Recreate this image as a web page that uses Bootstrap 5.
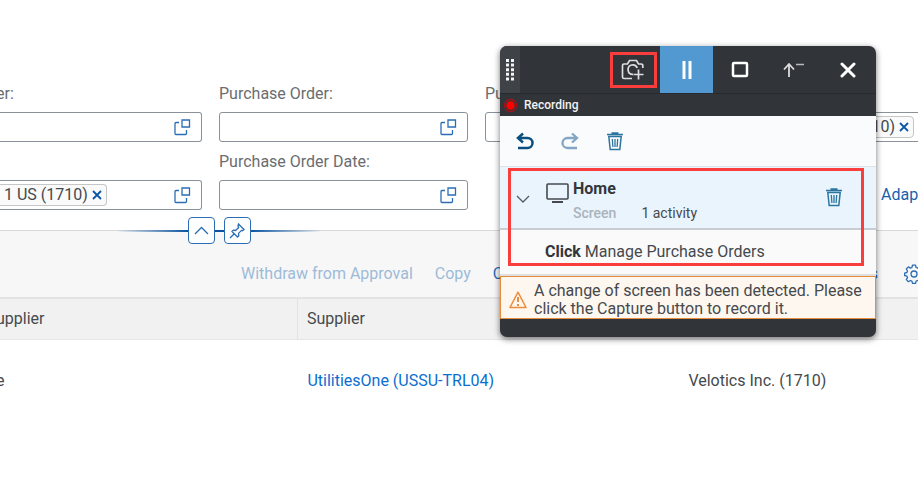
<!DOCTYPE html>
<html lang="en">
<head>
<meta charset="utf-8">
<meta name="viewport" content="width=device-width, initial-scale=1">
<title>Manage Purchase Orders</title>
<link href="https://cdn.jsdelivr.net/npm/bootstrap@5.3.0/dist/css/bootstrap.min.css" rel="stylesheet">
<style>
body{font-family:Roboto,"Liberation Sans",sans-serif;font-size:16px;line-height:20px;color:#45494d;overflow:hidden;min-height:100vh}
svg{display:block;fill:none}
svg:not([stroke]){stroke:currentColor}
button{border:0;background:none;padding:0;color:inherit;display:flex;align-items:center;justify-content:center}
a{text-decoration:none;color:#0a6ed1;white-space:nowrap}
.filter-bar{padding-top:84px;height:231px;border-bottom:1px solid #d9d9d9;box-shadow:0 1px 1px #e8e8e8}
.filter-grid{display:grid;grid-template-columns:202fr 249fr 249fr 167fr;column-gap:17px;row-gap:10px}
.filter-grid label{display:block;height:20px;color:#6a6d70;margin-bottom:8px;white-space:nowrap}
.cut{text-indent:-4px}
.field{display:flex;align-items:center;height:30px;border:1px solid #89919a;border-radius:3px;background:#fff;overflow:hidden}
.field input{border:0;outline:0;background:none;min-width:0;width:0;flex:1 1 0;height:26px}
.field button{color:#2a6db5;width:38px;height:28px;flex:none}
.open-left{border-left:0;border-top-left-radius:0;border-bottom-left-radius:0}
.open-right{border-right:0;border-top-right-radius:0;border-bottom-right-radius:0}
.token{display:flex;align-items:center;height:22px;border:1px solid #c4c6c8;border-radius:4px;background:#fafafa;padding-left:4px;white-space:nowrap}
.field .token button{width:18px;height:20px;color:#0a57a8}
.adapt{display:flex;align-items:center;justify-content:flex-end;height:30px}
.adapt a{width:37px;color:#1661ad}
.splitter{position:absolute;left:116px;top:217px;width:206px;height:27px;display:flex;justify-content:center;gap:9px;background:linear-gradient(90deg,transparent,#0854a0 35%,#0854a0 65%,transparent) 0 13px/100% 2px no-repeat}
.splitter button{width:27px;height:27px;border:1px solid #2a6db5;border-radius:4px;background:#fff;color:#2a6db5}
.actions{height:66px;background:#f7f7f7;padding:33px 0 13px 241px;gap:22px;align-items:center;color:#9dbbd9;white-space:nowrap}
.actions button{height:20px}
.actions .live{color:#2a6db5}
.tail{margin-left:auto;gap:26px}
.tail .gear{width:14px;overflow:hidden;justify-content:flex-start}
.orders{width:100%;table-layout:fixed;border-collapse:collapse}
.orders th{font-weight:400;height:41px;background:#f1f1f1;border-top:2px solid #e3e3e3;border-bottom:1px solid #e5e5e5;padding:0 9px}
.orders th+th{border-left:1px solid #e2e2e2}
.orders td{height:84px;padding:0 10px}
.orders .cut{padding:0}
.recorder{position:absolute;left:500px;top:46px;width:376px;border-radius:7px;overflow:hidden;background:#31353a;box-shadow:0 2px 6px rgba(0,0,0,.55)}
.rec-head{height:48px;color:#fff;border-bottom:1px solid #272a2e;padding-right:1px}
.rec-head button{width:54px}
.rec-head .pause{width:53px;background:#5199d0}
.grip{width:20px;background:#3f4247}
.rec-state{height:22px;color:#f2f2f2;font-size:12px;font-weight:500;padding-left:3px;gap:6px}
.rec-tools{height:51px;background:#fafbfd;border-bottom:1px solid #dfe3e7;padding-left:15px;gap:25px;color:#0b4f80}
.rec-tools button{width:20px;height:24px}
.redo{color:#84a5c4!important}
.bin{color:#2c759f!important}
.screen-row{height:63px;background:#e9f4fd;border-bottom:2px solid #c9cdd1;padding:12px 33px 0 16px}
.screen-name{font-weight:700;color:#32363a}
.screen-meta{font-size:14px;line-height:20px;gap:25px;padding-top:4px}
.screen-meta b{color:#abb3bb;font-weight:500}
.activity{height:46px;background:#fafafa;border-bottom:2px solid #dfdfdf;padding-left:45px}
.activity b{color:#32363a}
.notice{height:43px;background:#fef7f0;border:1px solid #e78c3c;padding:4px 0 0 8px;gap:7px;line-height:18px;color:#45494d}
.rec-foot{height:18px}
.marker{position:absolute;border:3px solid #fa3e3e;pointer-events:none}
.mark-camera{left:610px;top:52px;width:47px;height:36px}
.mark-step{left:508px;top:168px;width:356px;height:98px}
</style>
</head>
<body class="bg-white position-relative">
<svg width="0" height="0" class="position-absolute" aria-hidden="true">
<symbol id="help" viewBox="0 0 17 17"><path d="M5 3.5H2q-1 0-1 1v10q0 1 1 1h9.500q1 0 1-1V11M8 1h7.500v7H8z" stroke-width="1.300"/></symbol>
<symbol id="bin" viewBox="0 0 18 20"><path d="M1 3.500h16M5.500 2h7M2.800 5.500l1.400 13h9.600l1.400-13z" stroke-width="1.500"/><path d="M6.300 8l.6 8M9 8v8M11.700 8l-.6 8" stroke-width="1.300"/></symbol>
<symbol id="cross" viewBox="0 0 10 10"><path d="M1 1l8 8M9 1L1 9" stroke-width="1.800"/></symbol>
</svg>
<main>
<section class="filter-bar">
 <div class="filter-grid">
  <div><label for="f1" class="cut">er:</label><div class="field open-left"><input id="f1" type="text"><button aria-label="Value help"><svg width="17" height="17"><use href="#help"/></svg></button></div></div>
  <div><label for="f2">Purchase Order:</label><div class="field"><input id="f2" type="text"><button aria-label="Value help"><svg width="17" height="17"><use href="#help"/></svg></button></div></div>
  <div><label for="f3">Pu</label><div class="field"><input id="f3" type="text"></div></div>
  <div><label for="f4">&nbsp;</label><div class="field open-right"><input id="f4" type="text"><span class="token me-1">10)<button aria-label="Remove"><svg width="10" height="10"><use href="#cross"/></svg></button></span></div></div>
  <div><label for="f5">&nbsp;</label><div class="field open-left"><span class="token border-start-0 rounded-start-0">1 US (1710)<button aria-label="Remove"><svg width="10" height="10"><use href="#cross"/></svg></button></span><input id="f5" type="text"><button aria-label="Value help"><svg width="17" height="17"><use href="#help"/></svg></button></div></div>
  <div><label for="f6">Purchase Order Date:</label><div class="field"><input id="f6" type="text"><button aria-label="Value help"><svg width="17" height="17"><use href="#help"/></svg></button></div></div>
  <div></div>
  <div class="pt-4"><div class="adapt mt-1"><a href="#">Adapt</a></div></div>
 </div>
</section>
<div class="splitter">
 <button aria-label="Collapse header"><svg width="15" height="9"><path d="M1 8l6.500-6.500L14 8" stroke-width="1.300"/></svg></button>
 <button aria-label="Pin header"><svg width="16" height="16"><path d="M9.500 1l5.500 5.500-1.500 1.200-1-.3-3 3 .3 2.300-1.300 1.300-5.500-5.500 1.300-1.300 2.300.3 3-3-.6-1.500zM5.500 10.500L1 15" stroke-width="1.300"/></svg></button>
</div>
<section class="actions d-flex">
 <button disabled>Withdraw from Approval</button>
 <button disabled>Copy</button>
 <button class="live">C</button>
 <div class="tail d-flex"><button class="live">s</button><button class="live gear" aria-label="Settings"><svg class="flex-shrink-0" width="20" height="20" viewBox="0 0 20 20"><circle cx="10" cy="10" r="3" stroke-width="1.300"/><path d="M8.500 1.200h3l.6 2.300 1.500.6 2-1.200 2.100 2.100-1.200 2 .6 1.500 2.300.6v2.400l-2.300.6-.6 1.500 1.200 2-2.100 2.100-2-1.200-1.500.6-.6 2.300h-3l-.6-2.300-1.500-.6-2 1.200-2.100-2.100 1.200-2-.6-1.500-2.300-.6V9.100l2.300-.6.6-1.500-1.200-2 2.100-2.100 2 1.200 1.500-.6z" stroke-width="1.300" stroke-linejoin="round"/></svg></button></div>
</section>
<table class="orders">
 <colgroup><col style="width:32.400%"><col style="width:41.500%"><col></colgroup>
 <thead><tr><th class="cut">upplier</th><th>Supplier</th><th class="border-start-0"></th></tr></thead>
 <tbody><tr><td class="cut">e</td><td><a href="#">UtilitiesOne (USSU-TRL04)</a></td><td>Velotics Inc. (1710)</td></tr></tbody>
</table>
</main>
<aside class="recorder">
 <div class="rec-head d-flex">
  <div class="grip d-flex align-items-center justify-content-center"><svg width="10" height="22" stroke="#f4f4f4"><path d="M2.500 0v22M7.500 0v22" stroke-width="3" stroke-dasharray="3 1.600"/></svg></div>
  <button class="ms-auto" aria-label="Capture screen"><svg width="24" height="22" viewBox="0 0 24 22" stroke="#dedede" stroke-width="1.700"><path d="M11 19.500H3q-1.500 0-1.500-1.500V6.500Q1.500 5 3 5h3.500l2-3.500h7l2 3.500H20q1.800 0 1.800 1.500V9M12 15.300A4.700 4.700 0 1 1 16.200 9"/><path d="M17.500 10.500v10M12.500 15.500h10"/></svg></button>
  <button class="pause" aria-label="Pause"><svg width="10" height="18"><path d="M2 0v18M8 0v18" stroke-width="3"/></svg></button>
  <button aria-label="Stop"><svg width="18" height="18"><rect x="2" y="2" width="14" height="13" rx="1" stroke-width="2.500"/></svg></button>
  <button aria-label="Dock to top"><svg width="22" height="16"><path d="M6 15V3M1 7.500L6 2l5 5.500" stroke="#ddd" stroke-width="1.800"/><path d="M13 2.500h8" stroke="#bbb" stroke-width="1.300"/></svg></button>
  <button aria-label="Close"><svg width="16" height="16"><path d="M2 2l12 12M14 2L2 14" stroke-width="3" stroke-linecap="round"/></svg></button>
 </div>
 <div class="rec-state d-flex align-items-center"><svg width="15" height="15"><circle cx="7.500" cy="7.500" r="6" stroke="#a51217" stroke-width="1.300"/><circle cx="7.500" cy="7.500" r="4.200" fill="#f00" stroke="none"/></svg>Recording</div>
 <div class="rec-tools d-flex align-items-center">
  <button aria-label="Undo"><svg width="18" height="18" viewBox="0 0 18 18"><path d="M7 1.500L2 6l5 4.500M2 6h9.500a4.800 4.800 0 0 1 0 10H2" stroke-width="2.500"/></svg></button>
  <button class="redo" aria-label="Redo" disabled><svg width="18" height="18" viewBox="0 0 18 18"><path d="M11 1.500L16 6l-5 4.500M16 6H6.500a4.800 4.800 0 0 0 0 10H16" stroke-width="2.300"/></svg></button>
  <button class="bin" aria-label="Delete all"><svg width="18" height="20"><use href="#bin"/></svg></button>
 </div>
 <div class="screen-row d-flex">
  <button class="align-self-start mt-3" aria-label="Collapse"><svg width="14" height="8" stroke="#555b60"><path d="M1 1l6 6 6-6" stroke-width="1.300"/></svg></button>
  <svg class="ms-3 mt-1 flex-shrink-0" width="23" height="20" stroke="#45494d"><rect x="1" y="1" width="21" height="15" rx="1" stroke-width="1.600"/><path d="M6 19h11" stroke-width="2"/></svg>
  <div class="ms-1 flex-grow-1"><div class="screen-name">Home</div><div class="screen-meta d-flex"><b>Screen</b><span>1 activity</span></div></div>
  <button class="bin align-self-start mt-2" aria-label="Delete screen"><svg width="18" height="20"><use href="#bin"/></svg></button>
 </div>
 <div class="activity d-flex align-items-center"><span><b>Click</b> Manage Purchase Orders</span></div>
 <div class="notice d-flex align-items-center" role="alert"><svg class="flex-shrink-0" width="18" height="18" stroke="#ed8d3c"><path d="M9 1.200L17 16.500H1z" stroke-width="1.500" stroke-linejoin="round"/><path d="M9 6v5M9 13v2" stroke-width="2"/></svg><span>A change of screen has been detected. Please click the Capture button to record it.</span></div>
 <div class="rec-foot"></div>
</aside>
<div class="marker mark-camera"></div>
<div class="marker mark-step"></div>
<script src="https://cdn.jsdelivr.net/npm/bootstrap@5.3.0/dist/js/bootstrap.bundle.min.js"></script>
</body>
</html>
